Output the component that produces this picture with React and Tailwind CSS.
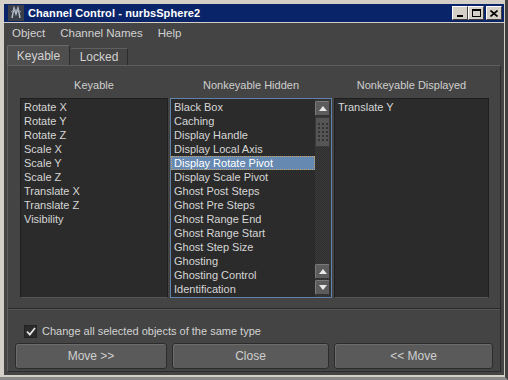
import React from "react";

const keyable = [
  "Rotate X",
  "Rotate Y",
  "Rotate Z",
  "Scale X",
  "Scale Y",
  "Scale Z",
  "Translate X",
  "Translate Z",
  "Visibility",
];

const hidden = [
  "Black Box",
  "Caching",
  "Display Handle",
  "Display Local Axis",
  "Display Rotate Pivot",
  "Display Scale Pivot",
  "Ghost Post Steps",
  "Ghost Pre Steps",
  "Ghost Range End",
  "Ghost Range Start",
  "Ghost Step Size",
  "Ghosting",
  "Ghosting Control",
  "Identification",
];

const displayed = ["Translate Y"];

const font = { fontFamily: '"Liberation Sans", Arial, sans-serif' };

const TitleButton = ({ children }) => (
  <div className="w-[16px] h-[14px] bg-[#d4d0c8] border border-t-white border-l-white border-r-[#404040] border-b-[#404040] flex items-center justify-center">
    {children}
  </div>
);

const Row = ({ label, selected }) => (
  <div
    className={
      "h-[14px] leading-[14px] pl-[3px] text-[11px] whitespace-nowrap " +
      (selected
        ? "bg-[#6689b1] text-white outline outline-1 outline-dotted outline-[#c9a46a] -outline-offset-1"
        : "text-[#d6d6d6]")
    }
  >
    {label}
  </div>
);

const ScrollButton = ({ up }) => (
  <div className="w-[15px] h-[15px] bg-[#5c5c5c] border border-t-[#7a7a7a] border-l-[#7a7a7a] border-r-[#333] border-b-[#333] rounded-[2px] flex items-center justify-center">
    <svg width="8" height="5" viewBox="0 0 8 5">
      {up ? (
        <polygon points="0,5 8,5 4,0" fill="#e8e8e8" />
      ) : (
        <polygon points="0,0 8,0 4,5" fill="#e8e8e8" />
      )}
    </svg>
  </div>
);

const Button = ({ children, className }) => (
  <div
    className={
      "h-[26px] flex items-center justify-center bg-[#5a5a5a] border border-[#2c2c2c] rounded-[3px] text-[12px] text-[#cfcfcf] shadow-[inset_1px_1px_0_#6c6c6c] " +
      className
    }
  >
    {children}
  </div>
);

export default function App() {
  return (
    <div
      className="w-[508px] h-[380px] bg-[#d4d0c8] flex flex-col pt-[4px] pl-[4px] pr-[1px] pb-[2px] border-r-[3px] border-r-[#404040] border-b-[3px] border-b-[#8a8a8a]"
      style={font}
    >
      {/* Title bar */}
      <div className="h-[18px] bg-[#0a246a] flex items-center pl-[4px] pr-[2px]">
        <div className="w-[16px] h-[16px] bg-[#3a3f48] flex items-center justify-center">
          <svg width="14" height="14" viewBox="0 0 14 14">
            <path d="M3 12 L5 2 L7 8 L9 2 L11 12" stroke="#b8c0cc" strokeWidth="1.4" fill="none" />
            <path d="M2 6 Q7 1 12 6" stroke="#8f98a6" strokeWidth="1" fill="none" />
          </svg>
        </div>
        <div className="ml-[4px] text-white font-bold text-[11px] leading-none tracking-[0.1px]">
          Channel Control - nurbsSphere2
        </div>
        <div className="ml-auto flex items-center">
          <TitleButton>
            <div className="w-[6px] h-[2px] bg-black mt-[6px] -ml-[1px]" />
          </TitleButton>
          <TitleButton>
            <div className="w-[9px] h-[8px] border border-black border-t-2" />
          </TitleButton>
          <div className="w-[2px]" />
          <TitleButton>
            <svg width="8" height="7" viewBox="0 0 8 7">
              <path d="M0.5 0.5 L7.5 6.5 M7.5 0.5 L0.5 6.5" stroke="black" strokeWidth="1.6" />
            </svg>
          </TitleButton>
        </div>
      </div>

      {/* Body */}
      <div className="flex-1 bg-[#444444] border-t border-t-[#d4d0c8] flex flex-col">
        {/* Menu bar */}
        <div className="h-[22px] flex items-center text-[11.5px] text-[#d2d2d2] pl-[8px] gap-[15px]">
          <span>Object</span>
          <span>Channel Names</span>
          <span>Help</span>
        </div>

        {/* Tabs */}
        <div className="flex items-end pl-[3px] h-[20px]">
          <div className="w-[63px] h-[20px] bg-[#4e4e4e] border border-b-0 border-t-[#6a6a6a] border-l-[#6a6a6a] border-r-[#2c2c2c] rounded-t-[2px] flex items-center justify-center text-[12px] text-[#d2d2d2]">
            Keyable
          </div>
          <div className="w-[58px] h-[17px] bg-[#444] border border-b-0 border-t-[#606060] border-l-[#444] border-r-[#2c2c2c] rounded-t-[2px] flex items-center justify-center text-[12px] text-[#d2d2d2]">
            Locked
          </div>
        </div>

        {/* Panel */}
        <div className="ml-[3px] mr-[3px] h-[307px] border border-t-[#5e5e5e] border-l-[#5e5e5e] border-r-[#2a2a2a] border-b-[#2a2a2a] flex flex-col px-[7px]">
          <div className="grid grid-cols-[148px_162px_155px] gap-x-[2px] pl-[5px] mt-[11px]">
            <div className="text-center text-[11px] text-[#cfcfcf] h-[21px]">Keyable</div>
            <div className="text-center text-[11px] text-[#cfcfcf] h-[21px]">Nonkeyable Hidden</div>
            <div className="text-center text-[11px] text-[#cfcfcf] h-[21px]">Nonkeyable Displayed</div>

            <div className="h-[200px] bg-[#2b2b2b] border border-[#1f1f1f] border-b-[#555] pt-[1px]">
              {keyable.map((k) => (
                <Row key={k} label={k} />
              ))}
            </div>

            <div className="h-[200px] bg-[#2b2b2b] border border-[#5f83ad] flex">
              <div className="flex-1 pt-[1px]">
                {hidden.map((k) => (
                  <Row key={k} label={k} selected={k === "Display Rotate Pivot"} />
                ))}
              </div>
              <div className="w-[16px] pr-[1px] flex flex-col bg-[repeating-conic-gradient(#3a3a3a_0_25%,#2e2e2e_0_50%)] bg-[length:2px_2px] py-[2px]">
                <ScrollButton up />
                <div className="h-[30px] mt-[1px] bg-[#555] border border-[#3a3a3a] flex items-center justify-center">
                  <div className="grid grid-cols-3 gap-[2px]">
                    {Array.from({ length: 15 }).map((_, i) => (
                      <div key={i} className="w-[2px] h-[2px] bg-[#333]" />
                    ))}
                  </div>
                </div>
                <div className="flex-1" />
                <ScrollButton up />
                <div className="h-[1px]" />
                <ScrollButton />
              </div>
            </div>

            <div className="h-[200px] bg-[#2b2b2b] border border-[#1f1f1f] border-b-[#555] pt-[1px]">
              {displayed.map((k) => (
                <Row key={k} label={k} />
              ))}
            </div>
          </div>

          <div className="-mx-[7px] mt-[10px] border-t border-t-[#2a2a2a] border-b border-b-[#555]" />

          <div className="flex items-center mt-[15px] pl-[9px] h-[13px]">
            <div className="w-[13px] h-[13px] bg-[#2b2b2b] border border-[#222] flex items-center justify-center">
              <svg width="10" height="9" viewBox="0 0 10 9">
                <path d="M1 4.5 L3.8 7.5 L9 1" stroke="#e6e6e6" strokeWidth="1.8" fill="none" />
              </svg>
            </div>
            <span className="ml-[5px] text-[11px] text-[#d2d2d2]">
              Change all selected objects of the same type
            </span>
          </div>

          <div className="flex gap-[5px] mt-[5px]">
            <Button className="w-[153px]">Move &gt;&gt;</Button>
            <Button className="w-[158px]">Close</Button>
            <Button className="w-[160px]">&lt;&lt; Move</Button>
          </div>
        </div>
      </div>
    </div>
  );
}
